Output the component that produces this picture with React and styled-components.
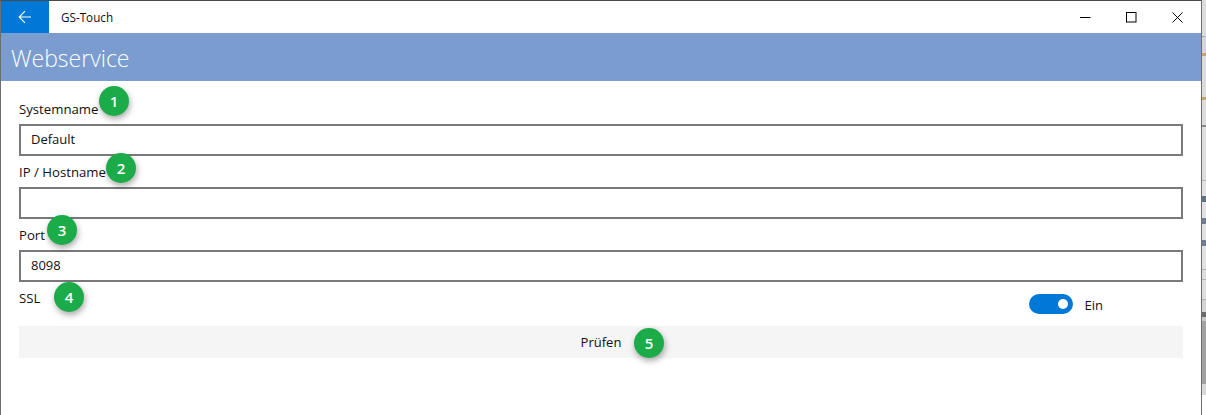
import React from 'react';
import styled, { createGlobalStyle } from 'styled-components';

const GlobalStyle = createGlobalStyle`
  html, body {
    margin: 0;
    padding: 0;
    background: #fff;
    overflow: hidden;
  }
  * { box-sizing: border-box; }
`;

// what shows of the window behind, from top to bottom: [height, colour]
const behindBands = [
  [36, '#dcdcdc'], [1, '#a8a8a8'], [16, '#d6d6d6'], [3, '#c9a36a'], [41, '#dcdcdc'], [3, '#c9a36a'],
  [25, '#dcdcdc'], [2, '#8c8c8c'], [53, '#dedede'], [1, '#b4b4b4'], [15, '#e2e2e2'], [6, '#5f748c'],
  [16, '#e2e2e2'], [6, '#6d7f93'], [16, '#e2e2e2'], [6, '#6d7f93'], [23, '#e2e2e2'], [1, '#b4b4b4'],
  [9, '#dedede'], [1, '#b4b4b4'], [19, '#dedede'], [1, '#b4b4b4'], [12, '#d4d4d4'], [5, '#6a6a6a'],
  [4, '#c8c8c8'], [63, '#a2a2a2'], [11, '#d8d8d8'],
];

function App() {
  return (
    <Screen>
      <GlobalStyle />
      <Window>
        <TitleBar>
          <BackButton>
            <svg width="14" height="14" viewBox="0 0 14 14" fill="none" stroke="#fff" strokeWidth="1.1">
              <path d="M13 7H1.5M7 1.2 1.2 7 7 12.8" />
            </svg>
          </BackButton>
          <AppName>GS-Touch</AppName>
          <WindowControls>
            <ControlButton>
              <svg width="11" height="11" viewBox="0 0 11 11" fill="none" stroke="#000">
                <path d="M0 5.5H10.5" />
              </svg>
            </ControlButton>
            <ControlButton>
              <svg width="11" height="11" viewBox="0 0 11 11" fill="none" stroke="#000">
                <rect x="0.5" y="0.5" width="9.5" height="9.5" />
              </svg>
            </ControlButton>
            <ControlButton>
              <svg width="11" height="11" viewBox="0 0 11 11" fill="none" stroke="#000">
                <path d="M0.5 0.5 10.5 10.5M10.5 0.5 0.5 10.5" />
              </svg>
            </ControlButton>
          </WindowControls>
        </TitleBar>
        <Header>Webservice</Header>
        <Content>
          <Field>
            <Label>Systemname</Label>
            <Badge $left={80} $top={-11}>1</Badge>
            <TextInput defaultValue="Default" />
          </Field>
          <Field>
            <Label>IP / Hostname</Label>
            <Badge $left={87} $top={-7}>2</Badge>
            <TextInput defaultValue="" />
          </Field>
          <Field>
            <Label>Port</Label>
            <Badge $left={28} $top={-8}>3</Badge>
            <TextInput defaultValue="8098" />
          </Field>
          <SwitchRow>
            <Label>SSL</Label>
            <Badge $left={35} $top={-4}>4</Badge>
            <SwitchGroup>
              <SwitchTrack>
                <SwitchKnob />
              </SwitchTrack>
              <SwitchText>Ein</SwitchText>
            </SwitchGroup>
          </SwitchRow>
          <CheckButton>
            Prüfen
            <Badge $left={615} $top={2}>5</Badge>
          </CheckButton>
        </Content>
      </Window>
      <Behind>
        {behindBands.map(([height, color], i) => (
          <BehindBand key={i} $height={height} $color={color} />
        ))}
      </Behind>
    </Screen>
  );
}

const Screen = styled.div`
  display: flex;
  width: 1206px;
  height: 415px;
  font-family: "Open Sans", "Noto Sans", sans-serif;
  color: #111;
`;

const Window = styled.div`
  width: 1202px;
  height: 415px;
  display: flex;
  flex-direction: column;
  background: #fff;
  border-top: 1px solid #4a4a4a;
  border-left: 1px solid #6e6e6e;
  border-right: 1px solid #6e6e6e;
`;

const Behind = styled.div`
  flex: 1;
  display: flex;
  flex-direction: column;
`;

const BehindBand = styled.div`
  height: ${props => props.$height}px;
  background: ${props => props.$color};
`;

const TitleBar = styled.div`
  height: 32px;
  display: flex;
  align-items: center;
`;

const BackButton = styled.div`
  width: 48px;
  height: 32px;
  background: #0078d7;
  display: flex;
  align-items: center;
  justify-content: center;
`;

const AppName = styled.div`
  margin-left: 12px;
  font-size: 11.7px;
  color: #111;
`;

const WindowControls = styled.div`
  margin-left: auto;
  display: flex;
  padding-right: 1px;
`;

const ControlButton = styled.div`
  width: 46px;
  height: 32px;
  display: flex;
  align-items: center;
  justify-content: center;
`;

const Header = styled.div`
  height: 48px;
  background: #7a9ccf;
  color: #fff;
  font-size: 23px;
  font-weight: 300;
  line-height: 51px;
  padding-left: 10px;
`;

const Content = styled.div`
  padding: 16px 18px 0;
  display: flex;
  flex-direction: column;
`;

const Field = styled.div`
  position: relative;
  display: flex;
  flex-direction: column;
`;

const Label = styled.div`
  height: 27px;
  font-size: 13.2px;
  line-height: 24px;
`;

const TextInput = styled.input`
  height: 32px;
  width: 100%;
  margin-bottom: 4px;
  padding: 0 10px 2px;
  border: 2px solid #7a7a7a;
  border-radius: 0;
  outline: none;
  background: #fff;
  font-family: inherit;
  font-size: 13px;
  color: #111;
`;

const SwitchRow = styled.div`
  position: relative;
  display: flex;
  height: 40px;
  justify-content: space-between;
`;

const SwitchGroup = styled.div`
  display: flex;
  align-items: center;
  height: 20px;
  margin: 8px 80px 0 0;
  gap: 12px;
`;

const SwitchTrack = styled.div`
  width: 44px;
  height: 20px;
  border-radius: 10px;
  background: #0078d7;
  position: relative;
`;

const SwitchKnob = styled.div`
  position: absolute;
  right: 5px;
  top: 5px;
  width: 10px;
  height: 10px;
  border-radius: 50%;
  background: #fff;
`;

const SwitchText = styled.div`
  font-size: 13px;
  padding-top: 2px;
`;

const CheckButton = styled.div`
  position: relative;
  height: 32px;
  background: #f5f5f5;
  display: flex;
  align-items: center;
  justify-content: center;
  font-size: 13px;
`;

const Badge = styled.div`
  position: absolute;
  left: ${props => props.$left}px;
  top: ${props => props.$top}px;
  width: 30px;
  height: 30px;
  border-radius: 50%;
  background: #1bab49;
  color: #fff;
  font-size: 15px;
  font-weight: 600;
  display: flex;
  align-items: center;
  justify-content: center;
  box-shadow: 1px 3px 6px rgba(0, 0, 0, 0.35);
`;

export default App;
